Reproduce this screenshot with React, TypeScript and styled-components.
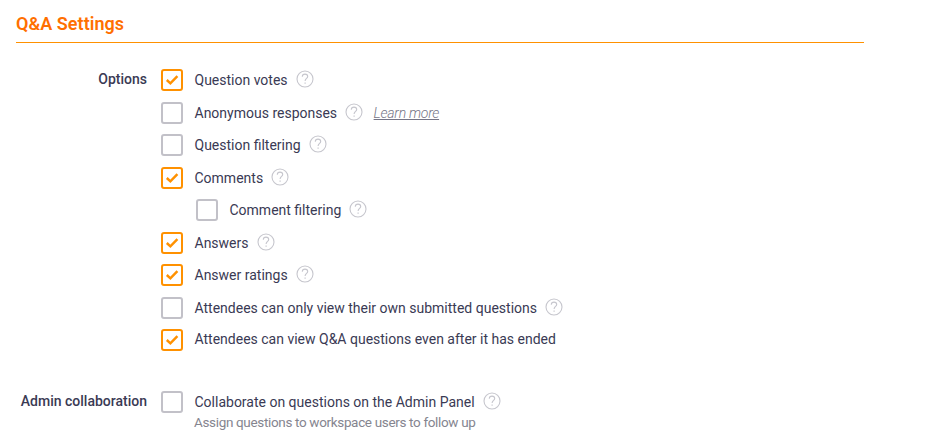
import React from "react";
import styled, { createGlobalStyle } from "styled-components";

const GlobalStyle = createGlobalStyle`
  * { box-sizing: border-box; }
  body {
    margin: 0;
    background: #fff;
    color: #3a3a54;
    font-family: Roboto, "Liberation Sans", sans-serif;
    font-size: 14px;
    line-height: 20px;
  }
`;

const Page = styled.main`
  width: 864px;
  padding: 12px 0 0 16px;
`;

const Title = styled.h1`
  margin: 0;
  height: 31px;
  border-bottom: 1px solid #ff9100;
  color: #ff6f00;
  font-size: 18px;
  font-weight: 600;
  line-height: 24px;
  letter-spacing: 0.05px;
`;

const Section = styled.section<{ $gap: number }>`
  display: grid;
  grid-template-columns: 131px 1fr;
  column-gap: 14px;
  margin-top: ${(p) => p.$gap}px;
`;

const SectionLabel = styled.h2`
  margin: 0;
  font-size: 14px;
  font-weight: 500;
  line-height: 20px;
  text-align: right;
  white-space: nowrap;
`;

const Row = styled.div<{ $nested?: boolean }>`
  display: flex;
  align-items: flex-start;
  height: 32.5px;
  padding-left: ${(p) => (p.$nested ? 35 : 0)}px;
`;

const Box = styled.span<{ $checked?: boolean }>`
  display: flex;
  flex: none;
  align-items: center;
  justify-content: center;
  width: 22px;
  height: 22px;
  border: 2px solid ${(p) => (p.$checked ? "#ff9100" : "#c2c1c8")};
  border-radius: 3px;
`;

const Label = styled.span<{ $raised?: boolean }>`
  margin-left: 11.5px;
  padding-top: ${(p) => (p.$raised ? 0 : 1)}px;
  white-space: nowrap;
`;

const HelpIcon = styled.svg`
  flex: none;
  width: 18px;
  height: 18px;
  margin: 1px 0 0 8px;
`;

const LearnMore = styled.a`
  margin-left: 10.5px;
  padding-top: 1px;
  color: #757586;
  font-size: 14px;
  font-style: italic;
  font-weight: 300;
  letter-spacing: -0.25px;
  text-decoration: underline;
  white-space: nowrap;
`;

const Hint = styled.p`
  margin: -12px 0 0 33px;
  color: #85858f;
  font-size: 13.5px;
  letter-spacing: -0.34px;
  line-height: 20px;
`;

const Check = () => (
  <svg width="14" height="12" viewBox="0 0 14 12" fill="none">
    <path d="M1.8 6 5.4 9.3 12.4 2.2" stroke="#ff9100" strokeWidth="2.5" />
  </svg>
);

const Help = () => (
  <HelpIcon viewBox="0 0 18 18" fill="none" stroke="#c6c6cd">
    <circle cx="9" cy="9" r="8" strokeWidth="1.1" />
    <path d="M6.3 6.8C6.3 5.1 7.4 4.1 9 4.1s2.7 1 2.7 2.4c0 1.9-2.6 2.1-2.6 4.6" strokeWidth="1.1" />
    <path d="M9.1 12.5v1.3" strokeWidth="1.2" />
  </HelpIcon>
);

interface OptionProps {
  label: string;
  checked?: boolean;
  nested?: boolean;
  help?: boolean;
  link?: string;
}

const Option = ({ label, checked, nested, help = true, link }: OptionProps) => (
  <Row $nested={nested}>
    <Box $checked={checked} role="checkbox" aria-checked={!!checked} aria-label={label}>
      {checked && <Check />}
    </Box>
    <Label $raised={!help}>{label}</Label>
    {help && <Help />}
    {link && <LearnMore href="#">{link}</LearnMore>}
  </Row>
);

const options: OptionProps[] = [
  { label: "Question votes", checked: true },
  { label: "Anonymous responses", link: "Learn more" },
  { label: "Question filtering" },
  { label: "Comments", checked: true },
  { label: "Comment filtering", nested: true },
  { label: "Answers", checked: true },
  { label: "Answer ratings", checked: true },
  { label: "Attendees can only view their own submitted questions" },
  { label: "Attendees can view Q&A questions even after it has ended", checked: true, help: false },
];

export default function App() {
  return (
    <>
      <GlobalStyle />
      <Page>
        <Title>Q&amp;A Settings</Title>
        <Section $gap={26}>
          <SectionLabel>Options</SectionLabel>
          <div>
            {options.map((o) => (
              <Option key={o.label} {...o} />
            ))}
          </div>
        </Section>
        <Section $gap={29.5}>
          <SectionLabel>Admin collaboration</SectionLabel>
          <div>
            <Option label="Collaborate on questions on the Admin Panel" />
            <Hint>Assign questions to workspace users to follow up</Hint>
          </div>
        </Section>
      </Page>
    </>
  );
}
